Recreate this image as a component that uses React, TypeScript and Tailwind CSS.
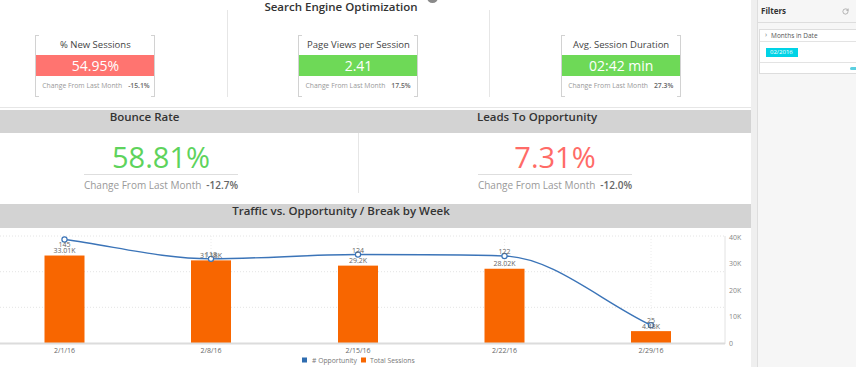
import React from 'react';
import { RotateCw } from 'lucide-react';

type Cat = { x: number; label: string; opp: number; sess: number; sessLabel: string; oppBelow?: boolean };

const cats: Cat[] = [
  { x: 64.5, label: '2/1/16', opp: 145, sess: 33.01, sessLabel: '33.01K', oppBelow: true },
  { x: 211, label: '2/8/16', opp: 118, sess: 31.18, sessLabel: '31.18K' },
  { x: 358, label: '2/15/16', opp: 124, sess: 29.2, sessLabel: '29.2K' },
  { x: 504.5, label: '2/22/16', opp: 122, sess: 28.02, sessLabel: '28.02K' },
  { x: 651, label: '2/29/16', opp: 25, sess: 4.48, sessLabel: '4.48K' },
];

const BASE = 343;
const oppY = (v: number) => BASE - (v / 150) * 107;
const sessY = (v: number) => BASE - (v / 40) * 106;

// monotone cubic, so the line doesn't overshoot between flat points
function monotone(pts: [number, number][]) {
  const n = pts.length;
  const d: number[] = [];
  for (let i = 0; i < n - 1; i++) d.push((pts[i + 1][1] - pts[i][1]) / (pts[i + 1][0] - pts[i][0]));
  const m: number[] = new Array(n).fill(0);
  m[0] = d[0];
  m[n - 1] = d[n - 2];
  for (let i = 1; i < n - 1; i++) m[i] = d[i - 1] * d[i] <= 0 ? 0 : (d[i - 1] + d[i]) / 2;
  for (let i = 0; i < n - 1; i++) {
    if (d[i] === 0) { m[i] = 0; m[i + 1] = 0; continue; }
    const a = m[i] / d[i];
    const b = m[i + 1] / d[i];
    const s = a * a + b * b;
    if (s > 9) {
      const t = 3 / Math.sqrt(s);
      m[i] = t * a * d[i];
      m[i + 1] = t * b * d[i];
    }
  }
  let path = `M${pts[0][0]},${pts[0][1]}`;
  for (let i = 0; i < n - 1; i++) {
    const h = (pts[i + 1][0] - pts[i][0]) / 3;
    path += ` C${pts[i][0] + h},${pts[i][1] + m[i] * h} ${pts[i + 1][0] - h},${pts[i + 1][1] - m[i + 1] * h} ${pts[i + 1][0]},${pts[i + 1][1]}`;
  }
  return path;
}

const KpiCard: React.FC<{ title: string; value: string; change: string; tone: 'red' | 'green' }> = ({ title, value, change, tone }) => (
  <div className="relative w-[120px] h-[62px] border-x border-[#d2d2d2] mx-auto">
    {/* bracket ticks */}
    <span className="absolute -left-px top-0 w-[4px] h-px bg-[#d2d2d2]" />
    <span className="absolute -right-px top-0 w-[4px] h-px bg-[#d2d2d2]" />
    <span className="absolute -left-px bottom-0 w-[4px] h-px bg-[#d2d2d2]" />
    <span className="absolute -right-px bottom-0 w-[4px] h-px bg-[#d2d2d2]" />
    <div className="h-[20px] flex items-center justify-center text-[9.5px] text-[#444]">{title}</div>
    <div className={`h-[21px] flex items-center justify-center text-[14px] text-white ${tone === 'red' ? 'bg-[#ff7470]' : 'bg-[#6ed957]'}`}>
      {value}
    </div>
    <div className="h-[21px] flex items-center gap-[6px] px-[6px] text-[6.8px] text-[#999] whitespace-nowrap">
      <span>Change From Last Month</span>
      <span className="font-semibold text-[#666]">{change}</span>
    </div>
  </div>
);

const BigKpi: React.FC<{ title: string; value: string; change: string; color: string; titlePad: string; border?: boolean }> = ({ title, value, change, color, titlePad, border }) => (
  <div className="flex flex-col">
    <div className={`h-[23px] bg-[#d3d3d3] flex justify-center ${titlePad}`}>
      <span className="text-[11.5px] font-semibold text-[#333] leading-[16px] -mt-[1px]">{title}</span>
    </div>
    <div className={`h-[71px] flex justify-center pt-[7px] ${border ? 'relative' : ''}`}>
      {border && <span className="absolute left-0 top-0 h-[60px] w-px bg-[#e6e6e6]" />}
      <div className="flex flex-col items-center">
        <div className={`text-[29px] leading-[34px] ${color}`}>{value}</div>
        <div className="border-t border-[#dedede] pt-[3px] flex gap-[5px] text-[10px] leading-[14px] whitespace-nowrap">
          <span className="text-[#999]">Change From Last Month</span>
          <span className="font-semibold text-[#666]">{change}</span>
        </div>
      </div>
    </div>
  </div>
);

const Chart: React.FC = () => {
  const pts = cats.map((c) => [c.x, oppY(c.opp)] as [number, number]);
  const font = "'Open Sans', 'Liberation Sans', sans-serif";
  return (
    <svg width={788} height={139} className="block">
      <g transform="translate(36,-228)" fontFamily={font}>
        {[236, 271.7, 307.3].map((y) => (
          <line key={y} x1={-9} x2={725} y1={y} y2={y} stroke="#e4e4e4" strokeDasharray="1 2" />
        ))}
        {cats.map((c) => (
          <line key={c.label} x1={c.x} x2={c.x} y1={236} y2={343} stroke="#ececec" strokeDasharray="1 2" />
        ))}
        <line x1={725} x2={725} y1={236} y2={344} stroke="#e2e2e2" />
        {cats.map((c) => (
          <rect key={c.label} x={c.x - 20} y={sessY(c.sess)} width={40} height={BASE - sessY(c.sess)} fill="#f86600" />
        ))}
        <line x1={-9} x2={725} y1={343.5} y2={343.5} stroke="#dcdcdc" strokeWidth={2} />
        <path d={monotone(pts)} fill="none" stroke="#3b74b8" strokeWidth={1.4} />
        {cats.map((c) => (
          <circle key={c.label} cx={c.x} cy={oppY(c.opp)} r={2.6} fill="#fff" stroke="#3b74b8" strokeWidth={1.2} />
        ))}
        {cats.map((c) => (
          <g key={c.label} fontSize={7} fill="#666" textAnchor="middle">
            <text x={c.x} y={oppY(c.opp) + (c.oppBelow ? 4.5 : -4.5)} dominantBaseline="central">{c.opp}</text>
            <text x={c.x} y={sessY(c.sess) - 5} dominantBaseline="central">{c.sessLabel}</text>
            <text x={c.x} y={350} dominantBaseline="central">{c.label}</text>
          </g>
        ))}
        {[40, 30, 20, 10, 0].map((v) => (
          <text key={v} x={729} y={sessY(v)} fontSize={7} fill="#888" dominantBaseline="central">
            {v === 0 ? '0' : `${v}K`}
          </text>
        ))}
        <rect x={302} y={357.5} width={5} height={5} fill="#2f6db0" />
        <text x={312} y={360} fontSize={6.8} fill="#777" dominantBaseline="central"># Opportunity</text>
        <rect x={361} y={357.5} width={5} height={5} fill="#f86600" />
        <text x={370} y={360} fontSize={6.8} fill="#777" dominantBaseline="central">Total Sessions</text>
      </g>
    </svg>
  );
};

export default function App() {
  return (
    <div className="w-[856px] h-[367px] flex overflow-hidden bg-white font-['Open_Sans','Liberation_Sans',sans-serif]">
      <div className="w-[751px] shrink-0 overflow-hidden bg-white">
        <div className="w-[788px] -ml-[36px]">
          {/* SEO section */}
          <div className="h-[108px] border-b border-[#e6e6e6]">
            <div className="h-[10px] flex justify-center pr-[14px]">
              <span className="text-[11.5px] font-semibold text-[#333] leading-[16px] -mt-[1px]">Search Engine Optimization</span>
              <span className="ml-[9px] -mt-[8px] w-[11px] h-[11px] rounded-full bg-[#8a8a8a]" />
            </div>
            <div className="grid grid-cols-3 h-[87px]">
              <div className="pt-[25px]">
                <KpiCard title="% New Sessions" value="54.95%" change="-15.1%" tone="red" />
              </div>
              <div className="pt-[25px] border-l border-[#e6e6e6]">
                <KpiCard title="Page Views per Session" value="2.41" change="17.5%" tone="green" />
              </div>
              <div className="pt-[25px] border-l border-[#e6e6e6]">
                <KpiCard title="Avg. Session Duration" value="02:42 min" change="27.3%" tone="green" />
              </div>
            </div>
          </div>

          {/* Big KPIs */}
          <div className="mt-[2px] grid grid-cols-2">
            <BigKpi title="Bounce Rate" value="58.81%" change="-12.7%" color="text-[#5ed35c]" titlePad="pr-[33px]" />
            <BigKpi title="Leads To Opportunity" value="7.31%" change="-12.0%" color="text-[#ff6b67]" titlePad="pr-[36px]" border />
          </div>

          {/* Chart */}
          <div className="h-[24px] bg-[#d3d3d3] flex justify-center pr-[34px]">
            <span className="text-[11.5px] font-semibold text-[#333] leading-[16px] -mt-[1px]">Traffic vs. Opportunity / Break by Week</span>
          </div>
          <Chart />
        </div>
      </div>

      <div className="w-[6px] shrink-0 bg-[#efefef]" />

      <div className="flex-1 bg-[#f6f6f6] border-l border-[#dedede] flex flex-col">
        <div className="h-[23px] flex items-center justify-between pl-[3px] pr-[7px] border-b border-[#dddddd]">
          <span className="text-[8px] font-bold text-[#333]">Filters</span>
          <RotateCw className="w-[7px] h-[7px] text-[#888]" strokeWidth={2} />
        </div>
        <div className="mt-[6px] ml-[1px] -mr-[4px] bg-white border border-[#dddddd] h-[45px] flex flex-col">
          <div className="h-[12px] flex items-center gap-[4px] pl-[5px] border-b border-[#e3e3e3] text-[6.5px] text-[#555]">
            <span className="text-[7px] text-[#777]">›</span>
            <span>Months in Date</span>
          </div>
          <div className="h-[21px] flex items-center pl-[6px] border-b border-[#e3e3e3]">
            <span className="bg-[#00d3e6] text-white text-[6px] px-[4px] h-[9px] leading-[9px] w-[32px]">02/2016</span>
          </div>
          <div className="flex-1 flex justify-end items-center">
            <span className="w-[9px] h-[3px] rounded-full bg-[#5acfe0]" />
          </div>
        </div>
      </div>
    </div>
  );
}
